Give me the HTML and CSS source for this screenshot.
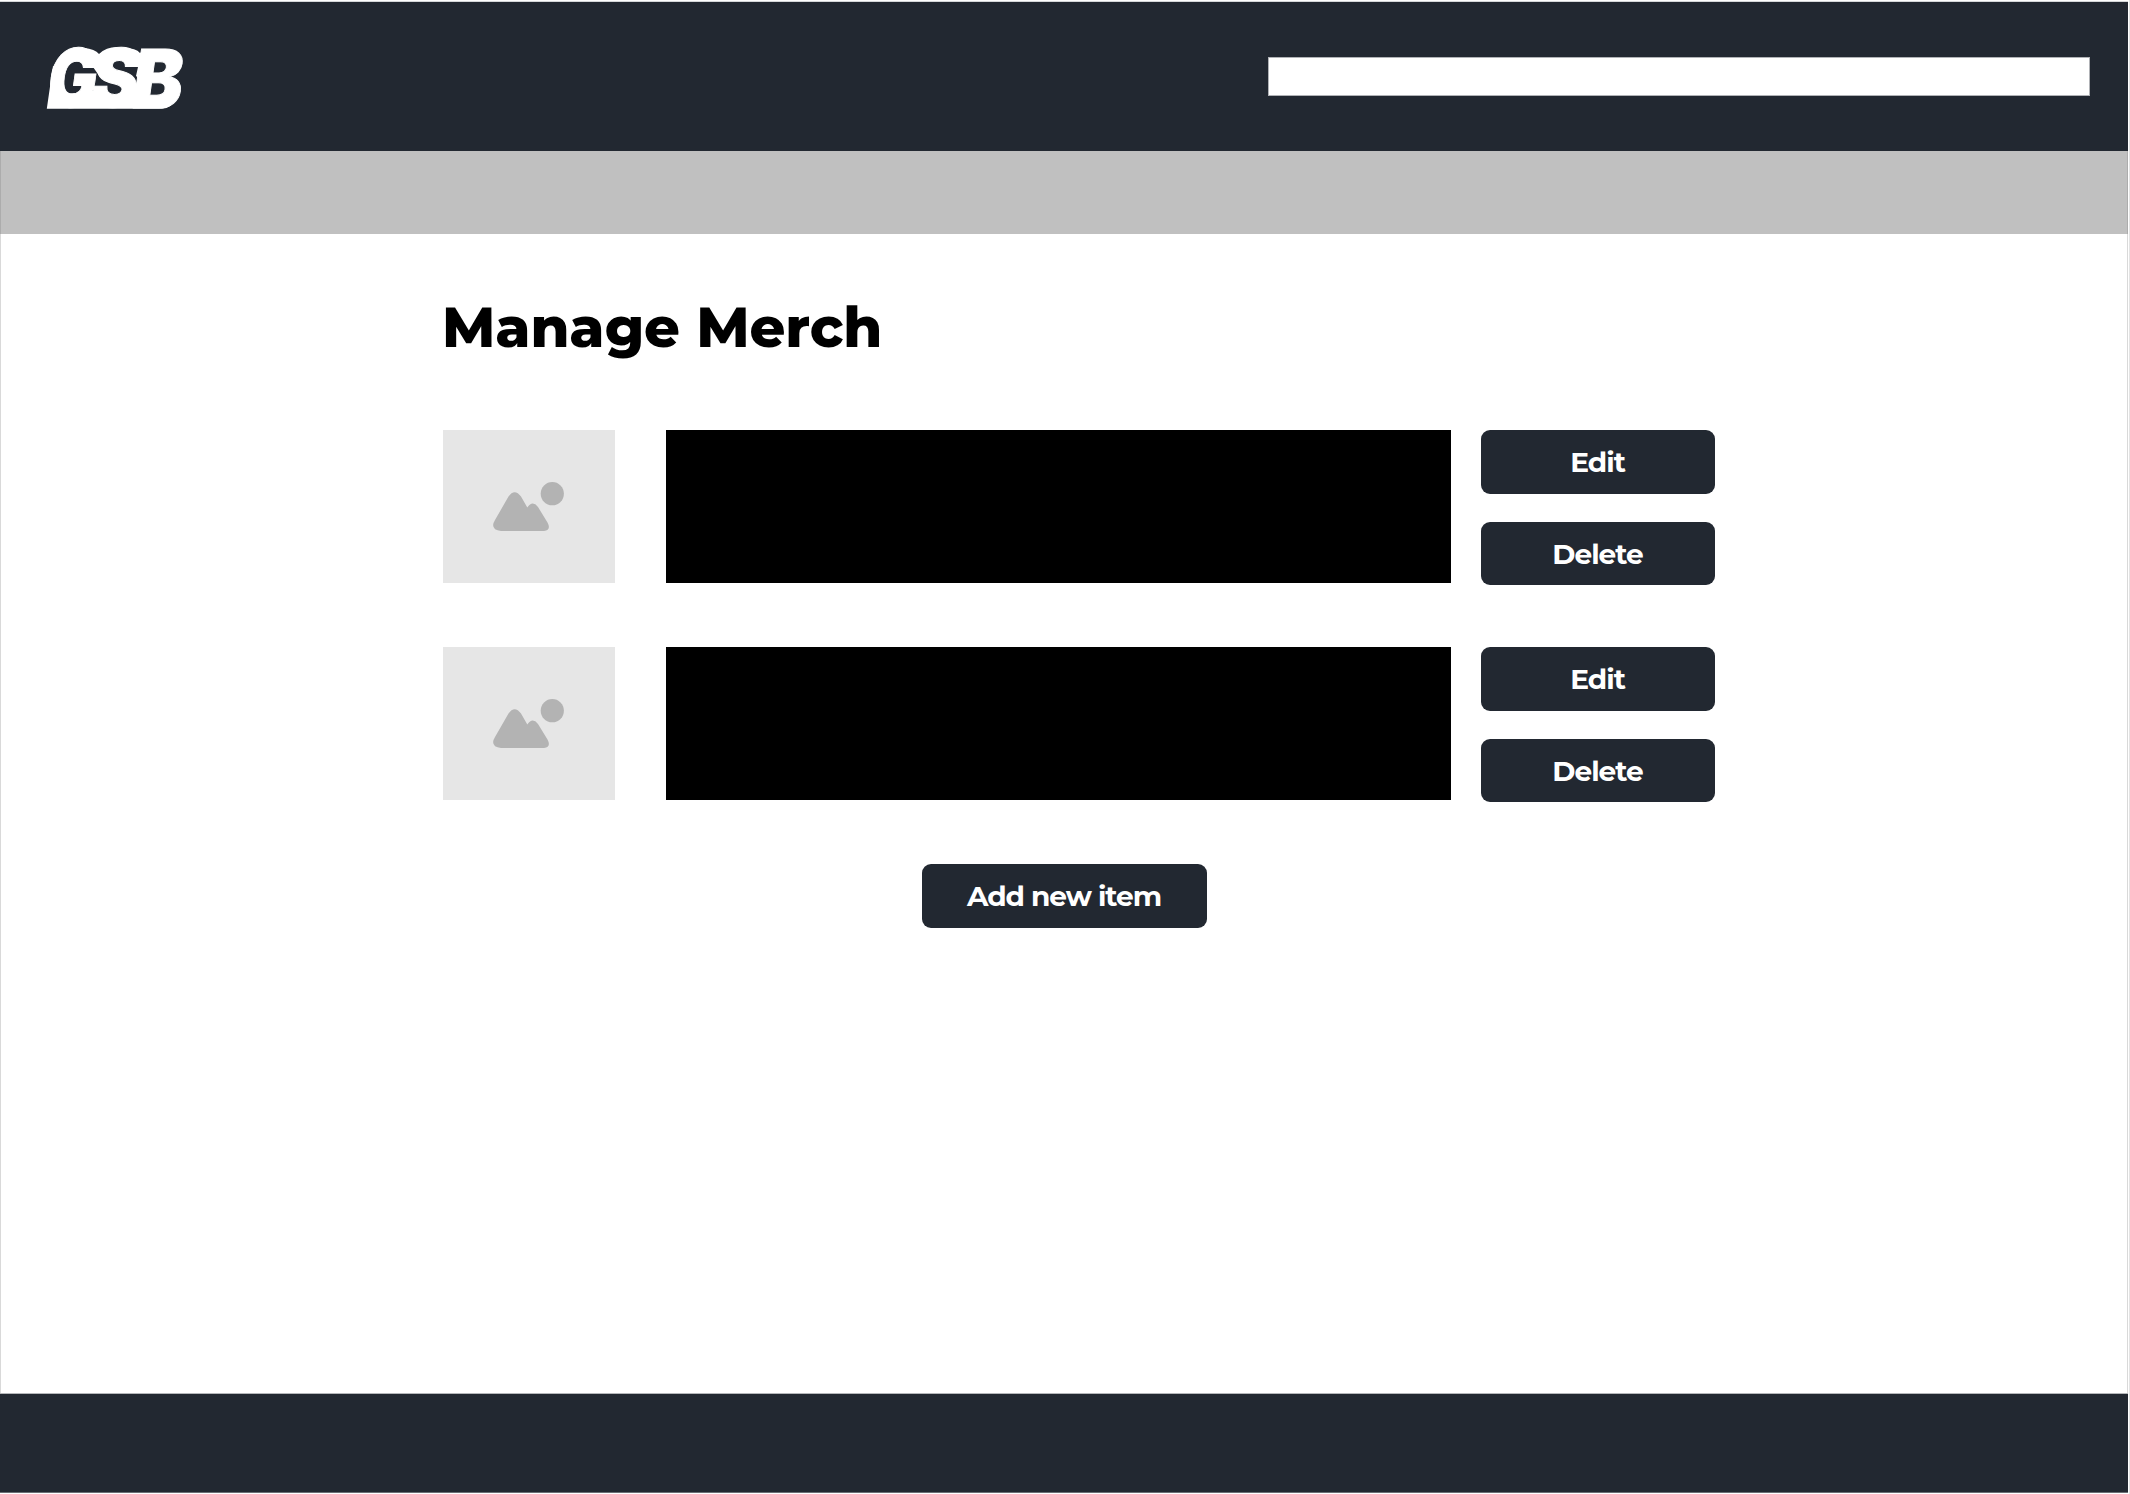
FILE: index.html
```html
<!DOCTYPE html>
<html lang="en">
<head>
<meta charset="utf-8">
<title>Manage Merch</title>
<link rel="stylesheet" href="styles.css">
</head>
<body>
<div class="page">
  <header class="header">
    <svg class="logo" viewBox="0 0 150 68" role="img" aria-label="GSB">
      <path class="logo-fill" d="M18 55H136Q132 67.700 122 67.700H6.800L13 25L22 28Z"/>
      <path class="logo-fill" d="M44 7Q55 8 59 13Q66 6 77 6L66 28L60 36L53 26ZM84 7Q96 7 100 12L106 8L102 40L96 35L98 26L92 22ZM92 44H99V60H92ZM46 50H60V60H46Z"/>
      <g class="logo-text" transform="skewX(-8)">
        <text x="14" y="66" textLength="49" lengthAdjust="spacingAndGlyphs">G</text>
        <text x="58" y="66" textLength="47" lengthAdjust="spacingAndGlyphs">S</text>
        <text x="99" y="66.500" textLength="50" lengthAdjust="spacingAndGlyphs">B</text>
      </g>
    </svg>
    <input class="search" type="text" aria-label="Search">
  </header>
  <nav class="subnav"></nav>
  <main class="main">
    <h1 class="title">Manage Merch</h1>
    <div class="items">
      <article class="item">
        <div class="thumb">
          <svg class="picture" viewBox="0 0 71 49"><circle cx="59.3" cy="11.7" r="11.6"/><path d="M2 38L15.5 14.5Q21.500 6 28 14.500L34.300 25.500Q39.500 18 45 25L54.500 40.500Q58.500 48 51 49H8Q-1.500 48 .5 41Z"/></svg>
        </div>
        <div class="details"></div>
        <div class="actions"><button class="button">Edit</button><button class="button">Delete</button></div>
      </article>
      <article class="item">
        <div class="thumb">
          <svg class="picture" viewBox="0 0 71 49"><circle cx="59.3" cy="11.7" r="11.6"/><path d="M2 38L15.5 14.5Q21.500 6 28 14.500L34.300 25.500Q39.500 18 45 25L54.500 40.500Q58.500 48 51 49H8Q-1.500 48 .5 41Z"/></svg>
        </div>
        <div class="details"></div>
        <div class="actions"><button class="button">Edit</button><button class="button">Delete</button></div>
      </article>
    </div>
    <button class="button button-add">Add new item</button>
  </main>
  <footer class="footer"></footer>
</div>
</body>
</html>
```
FILE: styles.css
```css
* { box-sizing: border-box; }
body { margin: 0; background: #fff; font-family: Montserrat, Inter, sans-serif; }
.page { width: 2130px; height: 1494px; display: flex; flex-direction: column; padding: 1px 1px 1px 0; border-right: 1px solid #e4e4e4; }
.header { height: 150px; flex: none; background: #222831; border-top: 1px solid #d5d7d9; display: flex; align-items: center; justify-content: space-between; padding: 0 38px 0 40px; }
.logo { width: 150px; height: 68px; margin-bottom: 3px; overflow: visible; }
.logo-fill { fill: #fff; }
.logo-text { fill: #fff; stroke: #fff; stroke-width: 1; font: 900 81px Inter, sans-serif; }
.search { width: 822px; height: 39px; border: 1px solid #b0b2b6; border-radius: 0; background: #fff; padding: 0 12px; font: 20px Inter, sans-serif; }
.subnav { height: 83px; flex: none; background: #c0c0c0; border: solid #acacac; border-width: 0 1px; }
.main { flex: 1; display: flex; flex-direction: column; align-items: center; border: solid #d9d9d9; border-width: 0 1px; }
.title { width: 1272px; height: 70px; margin: 59px 0 0 28px; font-size: 56px; line-height: 68px; font-weight: 800; letter-spacing: -0.1px; white-space: nowrap; }
.items { width: 1272px; margin: 67px 0 0 29px; display: flex; flex-direction: column; gap: 62px; }
.item { height: 155px; display: flex; }
.thumb { width: 172px; height: 153px; background: #e6e6e6; display: flex; justify-content: center; align-items: center; }
.picture { width: 71px; height: 49px; fill: #b3b3b3; }
.details { width: 785px; height: 153px; margin: 0 30px 0 51px; background: #000; }
.actions { width: 234px; display: flex; flex-direction: column; gap: 28px; }
.button { height: 63.5px; flex: none; border: 0; border-radius: 9px; padding: 0; background: #222831; color: #fff; font: 700 28px/64px Montserrat, Inter, sans-serif; letter-spacing: -1px; text-align: center; white-space: nowrap; }
.button-add { width: 285px; margin-top: 62px; }
.footer { height: 100px; flex: none; background: #222831; border-top: 1px solid #b5b7ba; border-bottom: 1px solid #6b6f75; }
```
